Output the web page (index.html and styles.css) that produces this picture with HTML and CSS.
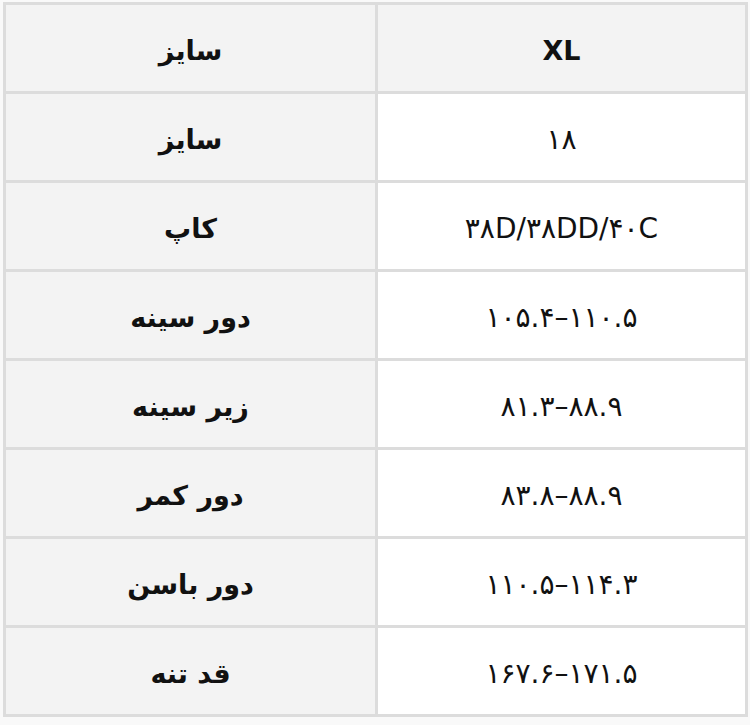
FILE: index.html
```html
<!DOCTYPE html>
<html lang="fa">
<head>
<meta charset="utf-8">
<link rel="stylesheet" href="styles.css">
</head>
<body>
<table class="size-table">
  <tr class="head">
    <td class="label">سایز</td>
    <td class="value xl">XL</td>
  </tr>
  <tr>
    <td class="label">سایز</td>
    <td class="value">۱۸</td>
  </tr>
  <tr>
    <td class="label">کاپ</td>
    <td class="value">۳۸D/۳۸DD/۴۰C</td>
  </tr>
  <tr>
    <td class="label">دور سینه</td>
    <td class="value">۱۰۵.۴–۱۱۰.۵</td>
  </tr>
  <tr>
    <td class="label">زیر سینه</td>
    <td class="value">۸۱.۳–۸۸.۹</td>
  </tr>
  <tr>
    <td class="label">دور کمر</td>
    <td class="value">۸۳.۸–۸۸.۹</td>
  </tr>
  <tr>
    <td class="label">دور باسن</td>
    <td class="value">۱۱۰.۵–۱۱۴.۳</td>
  </tr>
  <tr>
    <td class="label">قد تنه</td>
    <td class="value">۱۶۷.۶–۱۷۱.۵</td>
  </tr>
</table>
</body>
</html>
```
FILE: styles.css
```css
html, body {
  margin: 0;
  padding: 0;
  background: #f9f9f9;
}
body {
  padding: 2px 2px 0 3px;
  font-family: "DejaVu Sans", "Noto Sans", sans-serif;
  color: #111;
}
.size-table {
  width: 745px;
  border-collapse: collapse;
  border: 3px solid #dcdcdc;
  table-layout: fixed;
}
.size-table td {
  border: 3px solid #dcdcdc;
  height: 82px;
  padding: 4px 0 0 0;
  text-align: center;
  vertical-align: middle;
  font-size: 28px;
}
.label {
  width: 369px;
  background: #f3f3f3;
  font-weight: bold;
  font-size: 27px !important;
  direction: rtl;
}
.value {
  background: #ffffff;
  font-weight: normal;
}
.head .value {
  background: #f3f3f3;
}
.xl {
  font-weight: bold !important;
  font-size: 27px !important;
}
```
